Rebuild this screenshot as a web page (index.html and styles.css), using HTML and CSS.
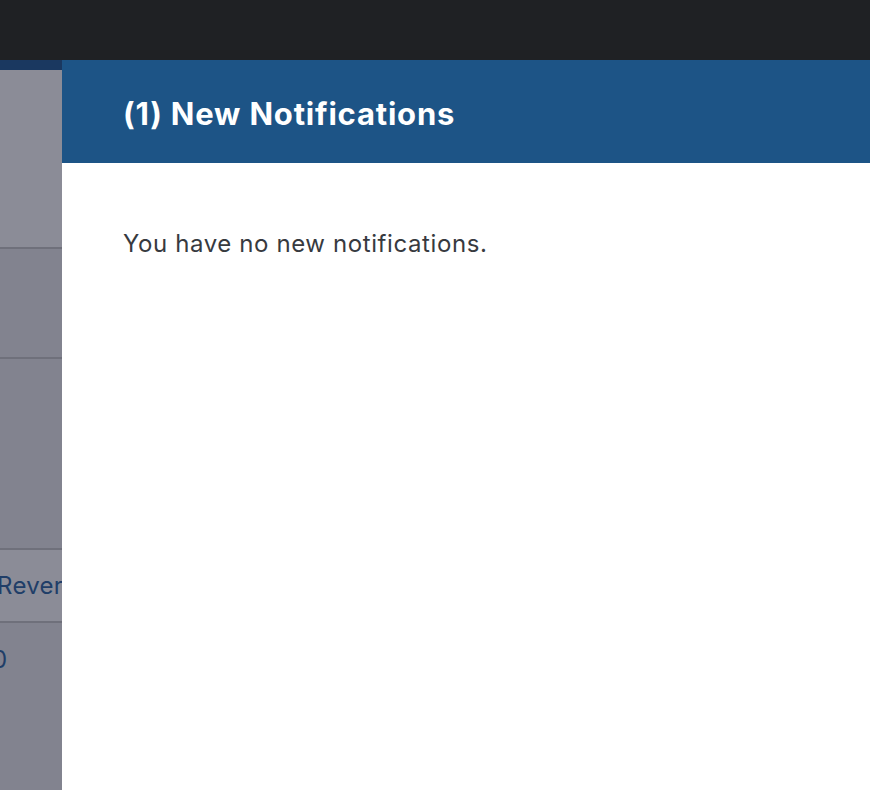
FILE: index.html
```html
<!DOCTYPE html>
<html>
<head>
<meta charset="utf-8">
<link rel="stylesheet" href="styles.css">
</head>
<body>
<div class="topbar"></div>
<div class="main">
  <div class="side">
    <div class="side-strip"></div>
    <div class="row light h1"></div>
    <div class="row dark h2"></div>
    <div class="row dark h3"></div>
    <div class="row light h4"><span class="cell">Rever</span></div>
    <div class="row dark grow"><span class="cell num">0</span></div>
  </div>
  <div class="panel">
    <div class="panel-head"><h1 class="title">(1) New Notifications</h1></div>
    <div class="panel-body"><p class="empty">You have no new notifications.</p></div>
  </div>
</div>
</body>
</html>
```
FILE: styles.css
```css
html, body { margin: 0; padding: 0; height: 100%; }
body {
  font-family: Inter, "Noto Sans", "Liberation Sans", sans-serif;
  background: #ffffff;
  display: flex;
  flex-direction: column;
  overflow: hidden;
}
.topbar { height: 60px; background: #1f2124; flex: none; }
.main { flex: 1; display: flex; min-height: 0; }
.side {
  width: 62px;
  flex: none;
  display: flex;
  flex-direction: column;
  overflow: hidden;
}
.side-strip { height: 10px; background: #1a3860; flex: none; }
.row {
  flex: none;
  border-bottom: 2px solid #6f707b;
  overflow: hidden;
  white-space: nowrap;
  display: flex;
  align-items: center;
}
.row.light { background: #8b8c97; }
.row.dark { background: #82838f; }
.h1 { height: 177px; }
.h2 { height: 108px; }
.h3 { height: 189px; }
.h4 { height: 71px; }
.grow { flex: 1; border-bottom: none; align-items: flex-start; }
.cell {
  color: #203e68;
  font-size: 24px;
  margin-left: -3px;
  letter-spacing: 0.3px;
}
.num { margin-top: 22px; margin-left: -8px; }
.panel { flex: 1; display: flex; flex-direction: column; }
.panel-head {
  height: 103px;
  background: #1d5486;
  display: flex;
  align-items: center;
  padding-left: 61px;
  flex: none;
}
.title {
  margin: 0;
  color: #ffffff;
  font-size: 31px;
  font-weight: 700;
  letter-spacing: 0.8px;
  padding-top: 3px;
}
.panel-body { padding: 66px 61px; }
.empty {
  margin: 0;
  font-size: 24px;
  letter-spacing: 0.6px;
  color: #373a3f;
}
```
